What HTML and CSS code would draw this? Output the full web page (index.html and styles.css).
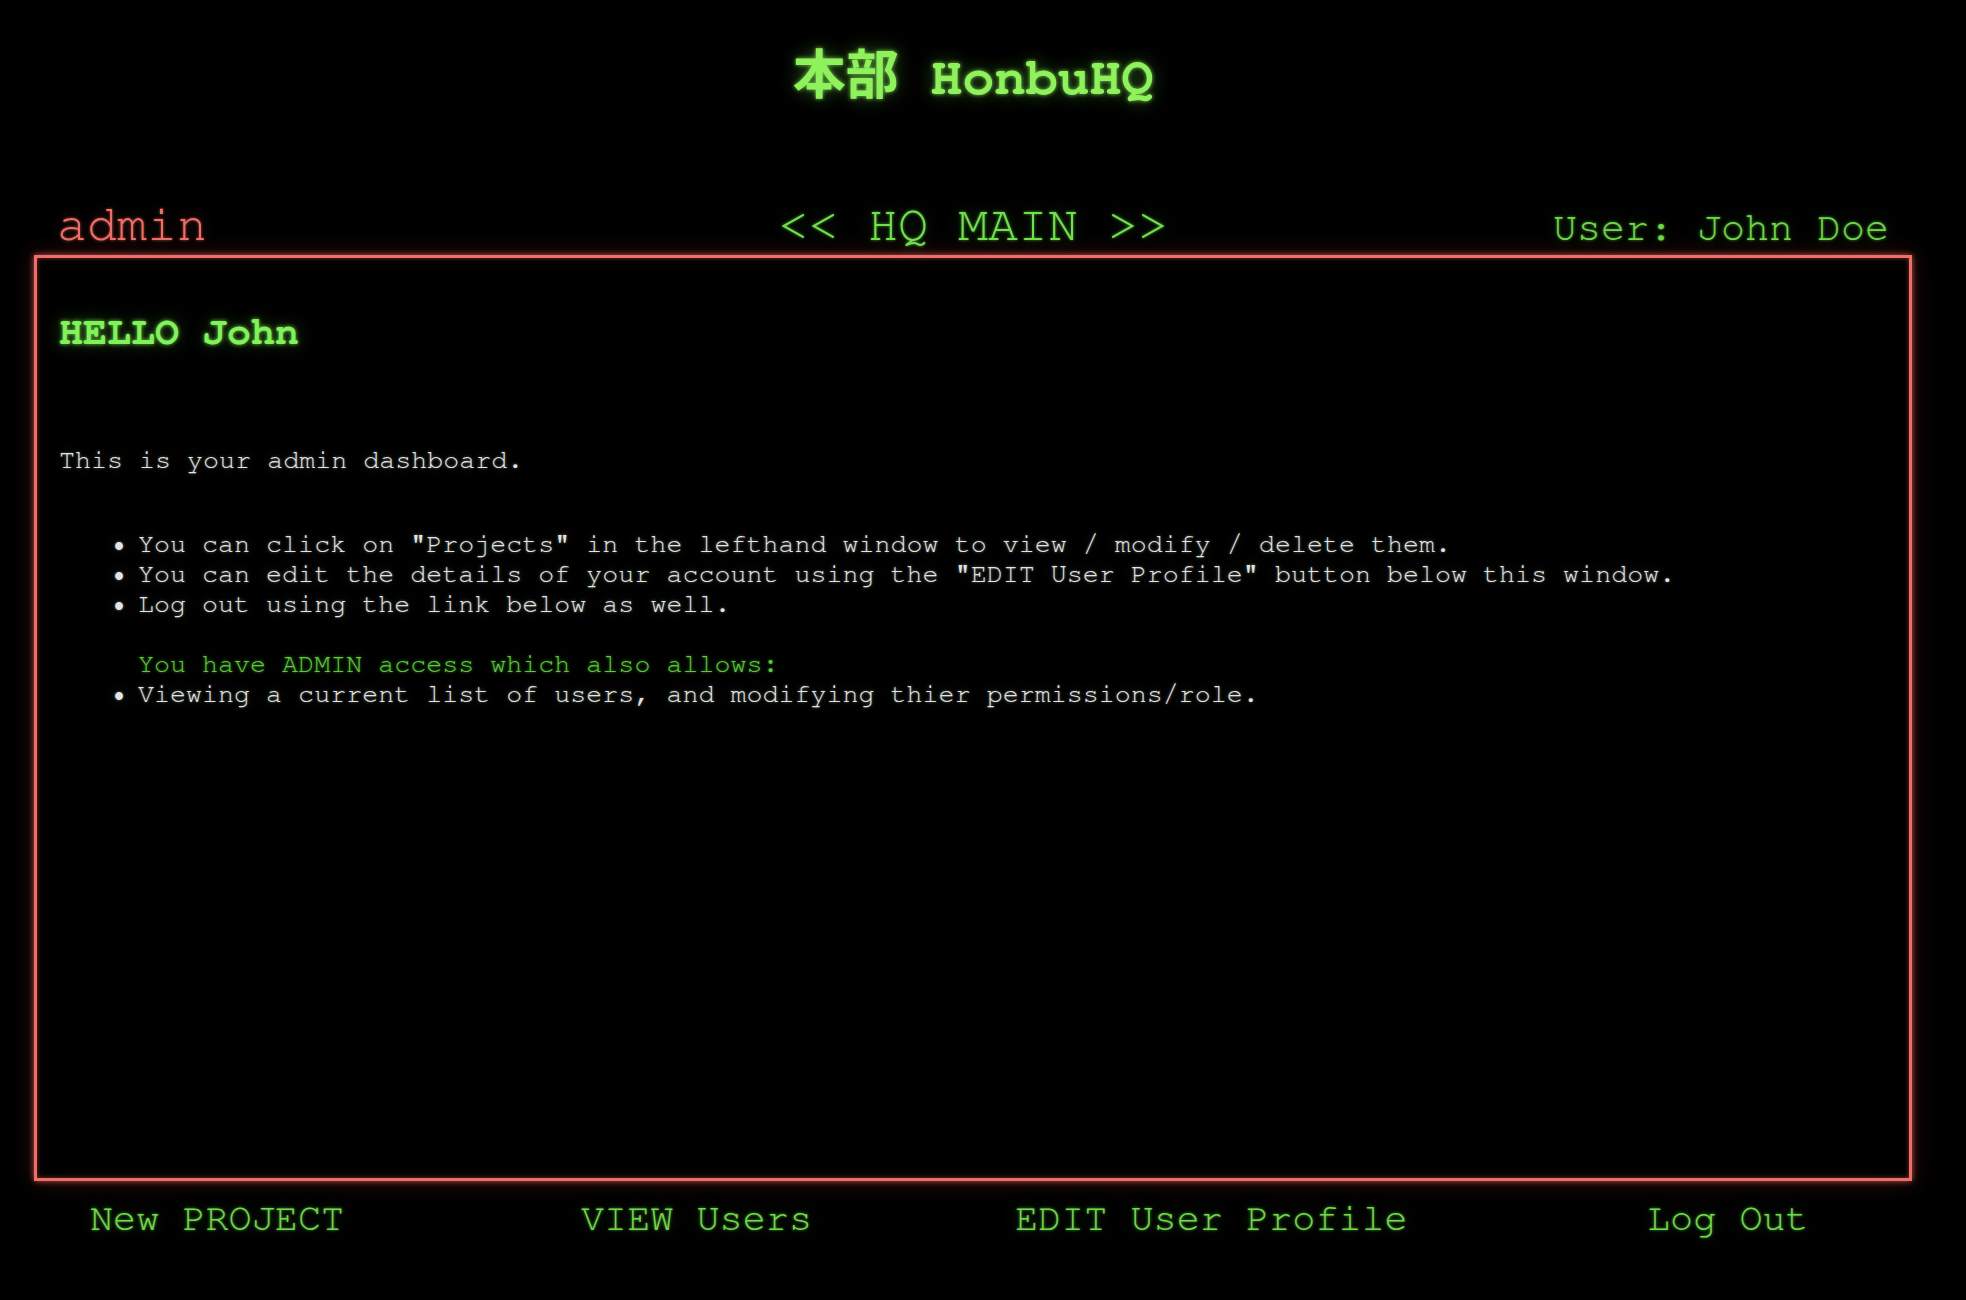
FILE: index.html
```html
<!DOCTYPE html>
<html lang="en">
<head>
<meta charset="utf-8">
<title>HonbuHQ</title>
<link rel="stylesheet" href="styles.css">
</head>
<body>
<div class="page">
  <header class="brand">
    <h1 class="brand-title"><span class="kanji">本部</span> HonbuHQ</h1>
  </header>
  <main>
    <div class="topbar">
      <span class="role">admin</span>
      <span class="section">&lt;&lt; HQ MAIN &gt;&gt;</span>
      <span class="user">User: John Doe</span>
    </div>
    <section class="window">
      <h2 class="hello">HELLO John</h2>
      <p class="intro">This is your admin dashboard.</p>
      <ul class="list first">
        <li>You can click on "Projects" in the lefthand window to view / modify / delete them.</li>
        <li>You can edit the details of your account using the "EDIT User Profile" button below this window.</li>
        <li>Log out using the link below as well.</li>
      </ul>
      <p class="admin-note">You have ADMIN access which also allows:</p>
      <ul class="list">
        <li>Viewing a current list of users, and modifying thier permissions/role.</li>
      </ul>
    </section>
    <nav class="footer">
      <a class="link" href="#">New PROJECT</a>
      <a class="link" href="#">VIEW Users</a>
      <a class="link" href="#">EDIT User Profile</a>
      <a class="link" href="#">Log Out</a>
    </nav>
  </main>
</div>
</body>
</html>
```

FILE: styles.css
```css
* { box-sizing: border-box; }

html, body {
  margin: 0;
  padding: 0;
  background: #000;
}

body {
  font-family: "Nimbus Mono PS", "FreeMono", "Courier New", "Liberation Mono", monospace;
  color: #e4e4e4;
  height: 1300px;
  overflow: hidden;
}

.page {
  width: 1878px;
  margin-left: 34px;
}

.brand {
  padding-top: 49px;
  margin-bottom: 92px;
  text-align: center;
}

.brand-title {
  margin: 0;
  font-size: 53px;
  line-height: 60px;
  font-weight: bold;
  color: #8ff25c;
  text-shadow: 0 0 4px rgba(140, 245, 90, 0.8), 0 0 18px rgba(120, 240, 80, 0.4);
}

.kanji {
  font-family: "Noto Sans CJK JP", "Noto Sans CJK SC", sans-serif;
  line-height: 40px;
}

.topbar {
  display: grid;
  grid-template-columns: 1fr auto 1fr;
  align-items: baseline;
  padding: 0 23px;
  margin-bottom: 3px;
}

.role {
  font-size: 50px;
  line-height: 48px;
  color: #ef6f68;
  text-shadow: 0 0 3px rgba(240, 110, 100, 0.7), 0 0 16px rgba(240, 100, 90, 0.3);
}

.section {
  font-size: 50px;
  line-height: 48px;
  color: #72e04e;
  text-shadow: 0 0 3px rgba(110, 225, 75, 0.7), 0 0 16px rgba(110, 225, 75, 0.3);
}

.user {
  justify-self: end;
  font-size: 40px;
  line-height: 48px;
  color: #6fd64a;
  text-shadow: 0 0 3px rgba(110, 215, 75, 0.7), 0 0 16px rgba(110, 215, 75, 0.3);
}

.window {
  height: 926px;
  border: 3px solid #ef6e68;
  box-shadow: 0 0 6px rgba(240, 100, 95, 0.75), 0 0 22px rgba(240, 90, 80, 0.2), inset 0 0 5px rgba(240, 100, 95, 0.5);
  padding: 52px 22px 0 22px;
  font-size: 26.7px;
  line-height: 30px;
}

.hello {
  margin: 0;
  font-size: 40px;
  line-height: 45px;
  font-weight: bold;
  color: #80f25a;
  text-shadow: 0 0 4px rgba(130, 240, 90, 0.8), 0 0 18px rgba(120, 240, 80, 0.35);
}

.intro {
  margin: 90px 0 0;
  text-shadow: 0 0 3px rgba(255, 255, 255, 0.45), 0 0 14px rgba(140, 255, 140, 0.18);
}

.list {
  list-style: none;
  margin: 0;
  padding-left: 79px;
  text-shadow: 0 0 3px rgba(255, 255, 255, 0.45), 0 0 14px rgba(140, 255, 140, 0.18);
}

.list.first {
  margin-top: 54px;
}

.list li::before {
  content: "•";
  display: inline-block;
  width: 27px;
  margin-left: -27px;
}

.admin-note {
  margin: 30px 0 0;
  padding-left: 79px;
  color: #5fc83d;
  text-shadow: 0 0 3px rgba(95, 200, 60, 0.7), 0 0 14px rgba(95, 200, 60, 0.25);
}

.footer {
  display: grid;
  grid-template-columns: 491px 434px 632px 1fr;
  padding-left: 56px;
  margin-top: 16px;
  font-size: 38.5px;
  line-height: 44px;
}

.link {
  color: #70d94c;
  text-decoration: none;
  text-shadow: 0 0 3px rgba(110, 215, 75, 0.7), 0 0 16px rgba(110, 215, 75, 0.3);
}
```
